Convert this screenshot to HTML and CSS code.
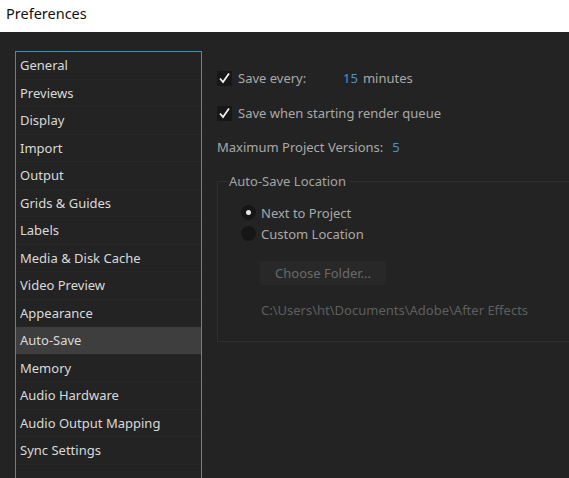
FILE: index.html
```html
<!DOCTYPE html>
<html lang="en">
<head>
  <meta charset="UTF-8" />
  <title>Preferences</title>
  <link rel="stylesheet" href="styles.css">
</head>
<body>
  <div class="titlebar">Preferences</div>

  <div class="main">
    <ul class="nav">
      <li>General</li>
      <li>Previews</li>
      <li>Display</li>
      <li>Import</li>
      <li>Output</li>
      <li>Grids &amp; Guides</li>
      <li>Labels</li>
      <li>Media &amp; Disk Cache</li>
      <li>Video Preview</li>
      <li>Appearance</li>
      <li class="active">Auto-Save</li>
      <li>Memory</li>
      <li>Audio Hardware</li>
      <li>Audio Output Mapping</li>
      <li>Sync Settings</li>
      <li></li>
    </ul>

    <div class="pane">
      <div class="row first">
        <span class="check"><svg viewBox="0 0 15 15" width="15" height="15"><path d="M3 7.5 L6 11 L12 2.5" fill="none" stroke="#f0f0f0" stroke-width="1.8"/></svg></span>
        <span class="label save-every">Save every:</span>
        <span class="num">15</span>
        <span class="label">minutes</span>
      </div>
      <div class="row">
        <span class="check"><svg viewBox="0 0 15 15" width="15" height="15"><path d="M3 7.5 L6 11 L12 2.5" fill="none" stroke="#f0f0f0" stroke-width="1.8"/></svg></span>
        <span class="label">Save when starting render queue</span>
      </div>
      <div class="row versions">
        <span class="label">Maximum Project Versions:</span>
        <span class="num">5</span>
      </div>

      <fieldset class="location">
        <legend>Auto-Save Location</legend>
        <div class="radio-row"><span class="radio on"></span><span class="label">Next to Project</span></div>
        <div class="radio-row"><span class="radio"></span><span class="label">Custom Location</span></div>
        <button class="choose">Choose Folder...</button>
        <div class="path">C:\Users\ht\Documents\Adobe\After Effects</div>
      </fieldset>
    </div>
  </div>
</body>
</html>
```
FILE: styles.css
```css
html, body { margin: 0; height: 100%; overflow: hidden; }
body { background: #232323; font-family: "Noto Sans", "Open Sans", sans-serif; font-size: 13px; color: #a9a9a9; }
.titlebar { background: #fff; color: #111; height: 32px; line-height: 27px; padding-left: 6px; font-size: 14.5px; }
.main { display: flex; padding: 19px 0 0 15px; gap: 15px; }
.nav { list-style: none; margin: 0; padding: 0; width: 185px; border: 1px solid #3993b6; border-bottom: none; height: 440px; }
.nav li { height: 27.5px; line-height: 26px; padding-left: 4px; color: #dadada; border-bottom: 1px solid #272727; box-sizing: border-box; }
.nav li.active { background: #3e3e3e; }
.pane { flex: 1; padding-top: 18px; }
.row { display: flex; align-items: center; height: 18px; margin-bottom: 17px; }
.row.versions { margin-bottom: 17px; height: 16px; }
.check { width: 15px; height: 15px; background: #171717; margin-right: 6px; display: flex; }
.save-every { width: 105px; }
.num { color: #4a95cf; margin-right: 5px; }
.versions .label { margin-right: 9px; }
.location { margin: 0; border: 1px solid #2f2f2f; border-right: none; padding: 12px 0 20px 23px; height: 136px; }
.location legend { color: #a4a4a4; padding: 0 4px 0 0; margin-left: -12px; }
.radio-row { display: flex; align-items: center; height: 21px; }
.radio { width: 15px; height: 15px; border-radius: 50%; background: #161616; margin-right: 5px; position: relative; }
.radio.on::after { content: ""; position: absolute; width: 5px; height: 5px; border-radius: 50%; background: #e6e6e6; left: 5px; top: 5px; }
.choose { display: block; margin: 17px 0 0 19px; width: 126px; height: 24px; background: #282828; border: none; border-radius: 2px; color: #6a6a6a; font-family: inherit; font-size: 13px; padding: 0; }
.path { margin: 16px 0 0 20px; color: #5e5e5e; }
```
